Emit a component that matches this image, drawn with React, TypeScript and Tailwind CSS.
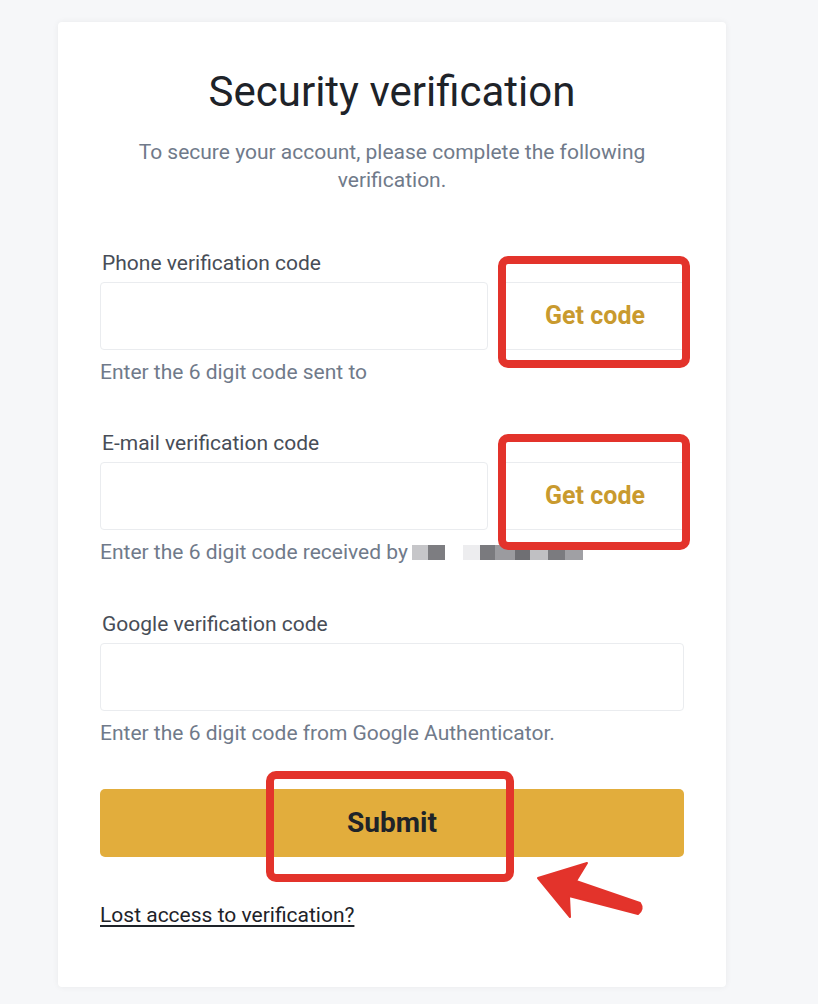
import React from "react";

const RedBox = ({ className }: { className: string }) => (
  <div
    className={`pointer-events-none absolute rounded-[10px] border-[8px] border-[#e3332b] ${className}`}
  />
);

const Blocks = () => (
  <span className="ml-[4px] inline-flex h-[15px] items-center">
    <span className="h-[15px] w-[16px] bg-[#c6c6c9]" />
    <span className="h-[15px] w-[17px] bg-[#7d7d81]" />
    <span className="h-[15px] w-[18px] bg-white" />
    <span className="h-[15px] w-[17px] bg-[#ededef]" />
    <span className="h-[15px] w-[15px] bg-[#7a7a7e]" />
    <span className="h-[15px] w-[20px] bg-[#9b9b9f]" />
    <span className="h-[15px] w-[15px] bg-[#6f6f73]" />
    <span className="h-[15px] w-[18px] bg-[#c0c0c3]" />
    <span className="h-[15px] w-[17px] bg-[#7b7b7f]" />
    <span className="h-[15px] w-[18px] bg-[#a0a0a4]" />
  </span>
);

export default function App() {
  return (
    <div
      className="relative min-h-[1004px] bg-[#f6f7f9]"
      style={{ fontFamily: "Roboto, 'Liberation Sans', sans-serif" }}
    >
      <div className="pl-[58px] pt-[22px] pb-[17px]">
        <div className="relative flex h-[965px] w-[668px] flex-col rounded-[4px] bg-white px-[42px] pt-[47px] shadow-[0_0_6px_rgba(0,0,0,0.06)]">
          <h1 className="text-center text-[42px] leading-[46px] text-[#1e2329]">
            Security verification
          </h1>
          <p className="mx-auto mt-[23px] w-[540px] text-center text-[21px] leading-[28px] text-[#707a8a]">
            To secure your account, please complete the following verification.
          </p>

          {/* Phone */}
          <div className="mt-[57px]">
            <div className="px-[2px] text-[21px] leading-[24px] text-[#474d57]">
              Phone verification code
            </div>
            <div className="mt-[7px] flex h-[68px]">
              <div className="w-[388px] rounded-[4px] border border-[#eaecef]" />
              <div className="relative ml-[18px] flex flex-1 items-center justify-center border-y border-[#eaecef]">
                <span className="text-[25px] font-bold text-[#c99a2e]">Get code</span>
              </div>
            </div>
            <div className="mt-[10px] text-[21px] leading-[24px] text-[#707a8a]">
              Enter the 6 digit code sent to
            </div>
          </div>

          {/* Email */}
          <div className="mt-[47px]">
            <div className="px-[2px] text-[21px] leading-[24px] text-[#474d57]">
              E-mail verification code
            </div>
            <div className="mt-[7px] flex h-[68px]">
              <div className="w-[388px] rounded-[4px] border border-[#eaecef]" />
              <div className="relative ml-[18px] flex flex-1 items-center justify-center border-y border-[#eaecef]">
                <span className="text-[25px] font-bold text-[#c99a2e]">Get code</span>
              </div>
            </div>
            <div className="mt-[10px] flex items-center text-[21px] leading-[24px] text-[#707a8a]">
              Enter the 6 digit code received by
              <Blocks />
            </div>
          </div>

          {/* Google */}
          <div className="mt-[48px]">
            <div className="px-[2px] text-[21px] leading-[24px] text-[#474d57]">
              Google verification code
            </div>
            <div className="mt-[7px] h-[68px] rounded-[4px] border border-[#eaecef]" />
            <div className="mt-[10px] text-[21px] leading-[24px] text-[#707a8a]">
              Enter the 6 digit code from Google Authenticator.
            </div>
          </div>

          <button className="mt-[44px] flex h-[68px] w-full items-center justify-center rounded-[5px] bg-[#e2ad3c] text-[28px] font-bold text-[#1e2329]">
            Submit
          </button>

          <div className="mt-[46px]">
            <a className="text-[21px] leading-[24px] text-[#1e2329] underline underline-offset-[3px]">
              Lost access to verification?
            </a>
          </div>
        </div>
      </div>

      {/* Annotations */}
      <RedBox className="left-[498px] top-[256px] h-[112px] w-[192px]" />
      <RedBox className="left-[498px] top-[434px] h-[116px] w-[192px]" />
      <RedBox className="left-[266px] top-[771px] h-[111px] w-[248px]" />
      <svg
        className="pointer-events-none absolute left-[530px] top-[855px]"
        width="120"
        height="70"
        viewBox="0 0 120 70"
      >
        <path
          d="M8 23 L57 8 L46 26 L110 48 Q114 54 108 59 L39 41 L40 62 Z"
          fill="#e3332b"
          stroke="#e3332b"
          strokeWidth="2"
          strokeLinejoin="round"
        />
      </svg>
    </div>
  );
}
